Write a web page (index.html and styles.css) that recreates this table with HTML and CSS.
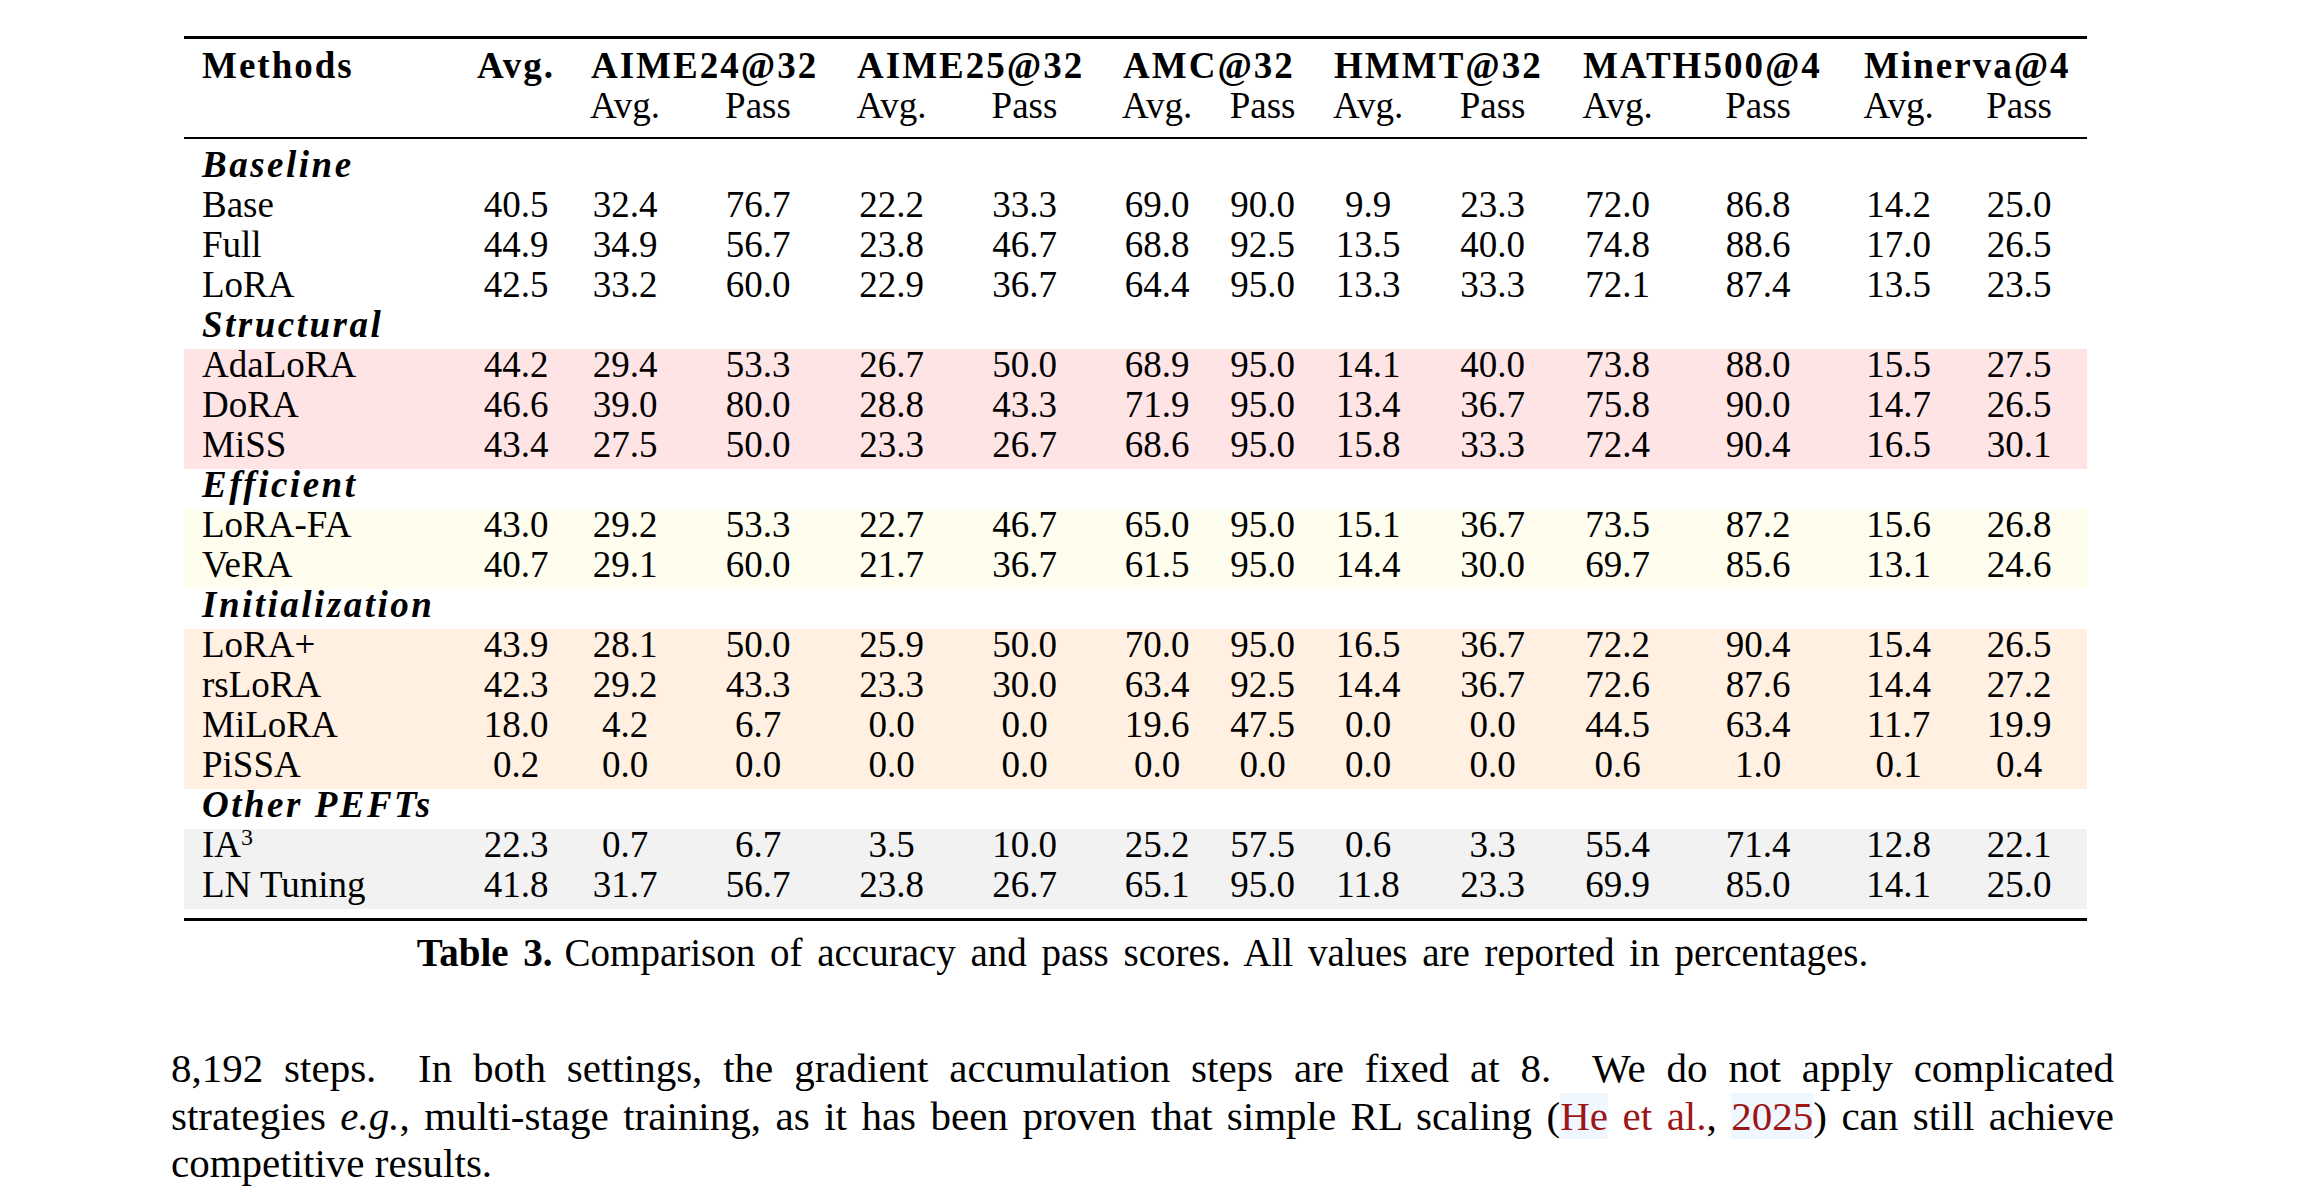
FILE: index.html
```html
<!DOCTYPE html>
<html lang="en">
<head>
<meta charset="utf-8">
<title>Table 3</title>
<link rel="stylesheet" href="styles.css">
</head>
<body>
<div class="page">
  <table class="results">
    <colgroup>
      <col class="c-method"><col class="c-avg">
      <col class="c-a24a"><col class="c-a24p">
      <col class="c-a25a"><col class="c-a25p">
      <col class="c-amca"><col class="c-amcp">
      <col class="c-hma"><col class="c-hmp">
      <col class="c-m5a"><col class="c-m5p">
      <col class="c-mia"><col class="c-mip">
    </colgroup>
    <thead>
      <tr class="head1">
        <th class="method">Methods</th>
        <th class="num">Avg.</th>
        <th class="group" colspan="2">AIME24@32</th>
        <th class="group" colspan="2">AIME25@32</th>
        <th class="group" colspan="2">AMC@32</th>
        <th class="group" colspan="2">HMMT@32</th>
        <th class="group" colspan="2">MATH500@4</th>
        <th class="group" colspan="2">Minerva@4</th>
      </tr>
      <tr class="head2">
        <th></th><th></th>
        <th>Avg.</th><th>Pass</th>
        <th>Avg.</th><th>Pass</th>
        <th>Avg.</th><th>Pass</th>
        <th>Avg.</th><th>Pass</th>
        <th>Avg.</th><th>Pass</th>
        <th>Avg.</th><th>Pass</th>
      </tr>
    </thead>
    <tbody>
      <tr class="label first"><th colspan="14">Baseline</th></tr>
      <tr><td class="name">Base</td><td>40.5</td><td>32.4</td><td>76.7</td><td>22.2</td><td>33.3</td><td>69.0</td><td>90.0</td><td>9.9</td><td>23.3</td><td>72.0</td><td>86.8</td><td>14.2</td><td>25.0</td></tr>
      <tr><td class="name">Full</td><td>44.9</td><td>34.9</td><td>56.7</td><td>23.8</td><td>46.7</td><td>68.8</td><td>92.5</td><td>13.5</td><td>40.0</td><td>74.8</td><td>88.6</td><td>17.0</td><td>26.5</td></tr>
      <tr><td class="name">LoRA</td><td>42.5</td><td>33.2</td><td>60.0</td><td>22.9</td><td>36.7</td><td>64.4</td><td>95.0</td><td>13.3</td><td>33.3</td><td>72.1</td><td>87.4</td><td>13.5</td><td>23.5</td></tr>

      <tr class="label"><th colspan="14">Structural</th></tr>
      <tr class="structural"><td class="name">AdaLoRA</td><td>44.2</td><td>29.4</td><td>53.3</td><td>26.7</td><td>50.0</td><td>68.9</td><td>95.0</td><td>14.1</td><td>40.0</td><td>73.8</td><td>88.0</td><td>15.5</td><td>27.5</td></tr>
      <tr class="structural"><td class="name">DoRA</td><td>46.6</td><td>39.0</td><td>80.0</td><td>28.8</td><td>43.3</td><td>71.9</td><td>95.0</td><td>13.4</td><td>36.7</td><td>75.8</td><td>90.0</td><td>14.7</td><td>26.5</td></tr>
      <tr class="structural"><td class="name">MiSS</td><td>43.4</td><td>27.5</td><td>50.0</td><td>23.3</td><td>26.7</td><td>68.6</td><td>95.0</td><td>15.8</td><td>33.3</td><td>72.4</td><td>90.4</td><td>16.5</td><td>30.1</td></tr>

      <tr class="label"><th colspan="14">Efficient</th></tr>
      <tr class="efficient"><td class="name">LoRA-FA</td><td>43.0</td><td>29.2</td><td>53.3</td><td>22.7</td><td>46.7</td><td>65.0</td><td>95.0</td><td>15.1</td><td>36.7</td><td>73.5</td><td>87.2</td><td>15.6</td><td>26.8</td></tr>
      <tr class="efficient"><td class="name">VeRA</td><td>40.7</td><td>29.1</td><td>60.0</td><td>21.7</td><td>36.7</td><td>61.5</td><td>95.0</td><td>14.4</td><td>30.0</td><td>69.7</td><td>85.6</td><td>13.1</td><td>24.6</td></tr>

      <tr class="label"><th colspan="14">Initialization</th></tr>
      <tr class="init"><td class="name">LoRA+</td><td>43.9</td><td>28.1</td><td>50.0</td><td>25.9</td><td>50.0</td><td>70.0</td><td>95.0</td><td>16.5</td><td>36.7</td><td>72.2</td><td>90.4</td><td>15.4</td><td>26.5</td></tr>
      <tr class="init"><td class="name">rsLoRA</td><td>42.3</td><td>29.2</td><td>43.3</td><td>23.3</td><td>30.0</td><td>63.4</td><td>92.5</td><td>14.4</td><td>36.7</td><td>72.6</td><td>87.6</td><td>14.4</td><td>27.2</td></tr>
      <tr class="init"><td class="name">MiLoRA</td><td>18.0</td><td>4.2</td><td>6.7</td><td>0.0</td><td>0.0</td><td>19.6</td><td>47.5</td><td>0.0</td><td>0.0</td><td>44.5</td><td>63.4</td><td>11.7</td><td>19.9</td></tr>
      <tr class="init"><td class="name">PiSSA</td><td>0.2</td><td>0.0</td><td>0.0</td><td>0.0</td><td>0.0</td><td>0.0</td><td>0.0</td><td>0.0</td><td>0.0</td><td>0.6</td><td>1.0</td><td>0.1</td><td>0.4</td></tr>

      <tr class="label"><th colspan="14">Other PEFTs</th></tr>
      <tr class="other"><td class="name">IA<sup>3</sup></td><td>22.3</td><td>0.7</td><td>6.7</td><td>3.5</td><td>10.0</td><td>25.2</td><td>57.5</td><td>0.6</td><td>3.3</td><td>55.4</td><td>71.4</td><td>12.8</td><td>22.1</td></tr>
      <tr class="other"><td class="name">LN Tuning</td><td>41.8</td><td>31.7</td><td>56.7</td><td>23.8</td><td>26.7</td><td>65.1</td><td>95.0</td><td>11.8</td><td>23.3</td><td>69.9</td><td>85.0</td><td>14.1</td><td>25.0</td></tr>
    </tbody>
  </table>

  <p class="caption"><span class="cap-label">Table 3.</span>Comparison of accuracy and pass scores. All values are reported in percentages.</p>

  <p class="body-text">
    <span class="line">8,192 steps.&nbsp; In both settings, the gradient accumulation steps are fixed at 8.&nbsp; We do not apply complicated</span>
    <span class="line">strategies <em>e.g.</em>, multi-stage training, as it has been proven that simple RL scaling (<a class="cite" href="#">He</a><span class="cite-text"> et al.</span>, <a class="cite" href="#">2025</a>) can still achieve</span>
    <span class="line last">competitive results.</span>
  </p>
</div>
</body>
</html>
```

FILE: styles.css
```css
html, body {
  margin: 0;
  padding: 0;
  background: #ffffff;
  color: #000000;
}

body {
  font-family: "Liberation Serif", "Times New Roman", serif;
}

.page {
  width: 1943px;
  margin-left: 171px;
}

/* ---------- table ---------- */
.results {
  table-layout: fixed;
  width: 1903px;
  margin-left: 13px;
  border-collapse: separate;
  border-spacing: 0;
  border-top: 3px solid #000;
  border-bottom: 3px solid #000;
  padding: 11px 0 9px;
  margin-top: 36px;
  font-size: 37px;
}

.c-method { width: 275px; }
.c-avg { width: 114px; }
.c-a24a { width: 104px; }
.c-a24p { width: 162px; }
.c-a25a { width: 105px; }
.c-a25p { width: 161px; }
.c-amca { width: 104px; }
.c-amcp { width: 107px; }
.c-hma { width: 104px; }
.c-hmp { width: 145px; }
.c-m5a { width: 105px; }
.c-m5p { width: 176px; }
.c-mia { width: 105px; }
.c-mip { width: 136px; }

.results th,
.results td {
  height: 32px;
  line-height: 32px;
  padding: 0 0 8px;
  text-align: center;
  white-space: nowrap;
  font-weight: normal;
  vertical-align: top;
}

.results .head1 th {
  font-weight: bold;
  letter-spacing: 2px;
}

.results .head1 .method {
  text-align: left;
  padding-left: 18px;
}

.results .head1 .group {
  text-align: left;
  padding-left: 18px;
}

.results .head2 th {
  padding-bottom: 15px;
  border-bottom: 2px solid #000;
}

.results .label th {
  text-align: left;
  padding-left: 18px;
  font-weight: bold;
  font-style: italic;
  letter-spacing: 2.5px;
}

.results .label.first th {
  padding-top: 10px;
}

.results td.name {
  text-align: left;
  padding-left: 18px;
}

.results sup {
  font-size: 24px;
  line-height: 0;
  vertical-align: 12px;
}

.structural td { background: #ffe4e6; }
.efficient td { background: #fffdee; }
.init td { background: #fff0e2; }
.other td { background: #f2f2f2; }

/* ---------- caption ---------- */
.caption {
  margin: 12px 0 0;
  text-align: center;
  font-size: 39px;
  line-height: 40px;
  word-spacing: 5px;
}

.cap-label {
  font-weight: bold;
  margin-right: 12px;
}

/* ---------- body text ---------- */
.body-text {
  margin: 72px 0 0;
  font-size: 41px;
  line-height: 47.5px;
}

.line {
  display: block;
  text-align: justify;
  text-align-last: justify;
}

.line.last {
  text-align-last: left;
}

.cite,
.cite-text {
  color: #9c1616;
  text-decoration: none;
}

.cite {
  background: #f0f7ff;
}
```
